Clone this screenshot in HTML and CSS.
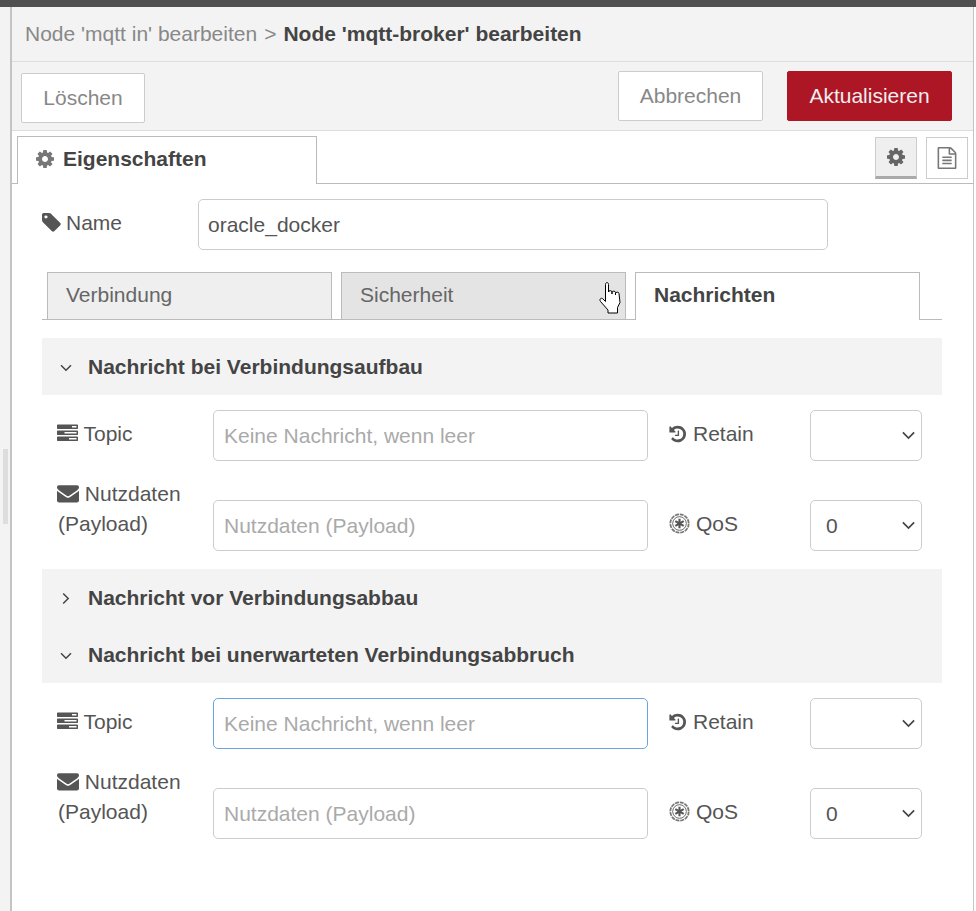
FILE: index.html
```html
<!DOCTYPE html>
<html>
<head>
    <title>Node 'mqtt-broker' bearbeiten</title>
    <link rel="stylesheet" href="styles.css">
</head>

<body>
    <svg class="icon-defs" xmlns="http://www.w3.org/2000/svg">
        <symbol id="i-cog" viewBox="0 0 1536 1536"><path d="M1024 768q0-106-75-181t-181-75-181 75-75 181 75 181 181 75 181-75 75-181zm512-109v222q0 12-8 23t-20 13l-185 28q-19 54-39 91 35 50 107 138 10 12 10 25t-9 23q-27 37-99 108t-94 71q-12 0-26-9l-138-108q-44 23-91 38-16 136-29 186-7 28-36 28h-222q-14 0-24.5-8.5t-11.5-21.5l-28-184q-49-16-90-37l-141 107q-10 9-25 9-14 0-25-11-126-114-165-168-7-10-7-23 0-12 8-23 15-21 51-66.5t54-70.5q-27-50-41-99l-183-27q-13-2-21-12.5t-8-23.5v-222q0-12 8-23t19-13l186-28q14-46 39-92-40-57-107-138-10-12-10-24 0-10 9-23 26-36 98.5-107.5t94.5-71.5q13 0 26 10l138 107q44-23 91-38 16-136 29-186 7-28 36-28h222q14 0 24.5 8.5t11.5 21.5l28 184q49 16 90 37l142-107q9-9 24-9 13 0 25 10 129 119 165 170 7 8 7 22 0 12-8 23-15 21-51 66.5t-54 70.5q26 50 41 98l183 28q13 2 21 12.5t8 23.5z"/></symbol>
        <symbol id="i-tag" viewBox="128 256 1536 1536"><path d="M576 576q0-53-37.500-90.500t-90.500-37.500-90.500 37.500-37.500 90.500 37.500 90.500 90.500 37.500 90.500-37.500 37.500-90.500zm1067 576q0 53-37 90l-491 492q-39 37-91 37-53 0-90-37l-715-716q-38-37-64.500-101t-26.500-117v-416q0-52 38-90t90-38h416q53 0 117 26.500t102 64.500l715 714q37 39 37 91z"/></symbol>
        <symbol id="i-tasks" viewBox="0 0 1792 1792"><path d="M1024 1408h640v-128h-640v128zm-384-512h1024v-128h-1024v128zm640-512h384v-128h-384v128zm512 832v256q0 26-19 45t-45 19h-1664q-26 0-45-19t-19-45v-256q0-26 19-45t45-19h1664q26 0 45 19t19 45zm0-512v256q0 26-19 45t-45 19h-1664q-26 0-45-19t-19-45v-256q0-26 19-45t45-19h1664q26 0 45 19t19 45zm0-512v256q0 26-19 45t-45 19h-1664q-26 0-45-19t-19-45v-256q0-26 19-45t45-19h1664q26 0 45 19t19 45z"/></symbol>
        <symbol id="i-envelope" viewBox="0 0 1792 1792"><path d="M1792 710v794q0 66-47 113t-113 47h-1472q-66 0-113-47t-47-113v-794q44 49 101 87 362 246 497 345 57 42 92.500 65.500t94.500 48 110 24.500h2q51 0 110-24.500t94.500-48 92.500-65.500q170-123 498-345 57-39 100-87zm0-294q0 79-49 151t-122 123q-376 261-468 325-10 7-42.500 30.500t-54 38-52 32.500-57.500 27-50 9h-2q-23 0-50-9t-57.500-27-52-32.500-54-38-42.500-30.500q-91-64-262-182.500t-205-142.500q-62-42-117-115.500t-55-136.500q0-78 41.500-130t118.500-52h1472q65 0 112.500 47t47.500 113z"/></symbol>
        <symbol id="i-history" viewBox="0 0 1664 1664"><path transform="translate(0 -64)" d="M1664 896q0 156-61 298t-164 245-245 164-298 61q-172 0-327-72.500t-264-204.500q-7-10-6.500-22.500t8.500-20.500l137-138q10-9 25-9 16 2 23 12 73 95 179 147t225 52q104 0 198.500-40.500t163.500-109.500 109.500-163.500 40.500-198.500-40.500-198.500-109.500-163.500-163.500-109.500-198.500-40.500q-98 0-188 35.500t-160 101.500l137 138q31 30 14 69-17 40-59 40h-448q-26 0-45-19t-19-45v-448q0-42 40-59 39-17 69 14l130 129q107-101 244.500-156.500t284.500-55.500q156 0 298 61t245 164 164 245 61 298zm-640-288v448q0 14-9 23t-23 9h-320q-14 0-23-9t-9-23v-64q0-14 9-23t23-9h224v-352q0-14 9-23t23-9h64q14 0 23 9t9 23z"/></symbol>
        <symbol id="i-empire" viewBox="0 0 24 24">
            <circle cx="12" cy="12" r="10.500" fill="none" stroke="#777" stroke-width="2" stroke-dasharray="4.500 1"/>
            <circle cx="12" cy="12" r="7.800" fill="none" stroke="#555" stroke-width="1"/>
            <path d="M12 6.500v11M7.200 9.200l9.600 5.600M16.800 9.200l-9.600 5.600" fill="none" stroke="#555" stroke-width="2.400"/>
        </symbol>
        <symbol id="i-file" viewBox="0 0 1792 1792"><path d="M1596 380q28 28 48 76t20 88v1152q0 40-28 68t-68 28h-1344q-40 0-68-28t-28-68v-1600q0-40 28-68t68-28h896q40 0 88 20t76 48zm-444-244v376h376q-10-29-22-41l-313-313q-12-12-41-22zm384 1528v-1024h-416q-40 0-68-28t-28-68v-416h-768v1536h1280zm-1024-864q0-14 9-23t23-9h704q14 0 23 9t9 23v64q0 14-9 23t-23 9h-704q-14 0-23-9t-9-23v-64zm736 224q14 0 23 9t9 23v64q0 14-9 23t-23 9h-704q-14 0-23-9t-9-23v-64q0-14 9-23t23-9h704zm0 256q14 0 23 9t9 23v64q0 14-9 23t-23 9h-704q-14 0-23-9t-9-23v-64q0-14 9-23t23-9h704z"/></symbol>
        <symbol id="i-down" viewBox="0 0 12 8"><path d="M1 1.200l5 5 5-5" fill="none" stroke="currentColor" stroke-width="1.500"/></symbol>
        <symbol id="i-right" viewBox="0 0 8 12"><path d="M1.200 1l5 5-5 5" fill="none" stroke="currentColor" stroke-width="1.500"/></symbol>
    </svg>

    <div class="top-bar"></div>

    <div class="workspace">
        <div class="side-strip"><div class="strip-handle"></div></div>

        <div class="panel">
            <div class="title-bar">
                <span class="crumb">Node 'mqtt in' bearbeiten</span>
                <span class="crumb-sep">&gt;</span>
                <span class="crumb-current">Node 'mqtt-broker' bearbeiten</span>
            </div>

            <div class="button-bar">
                <button class="btn btn-delete">Löschen</button>
                <button class="btn btn-cancel">Abbrechen</button>
                <button class="btn btn-primary">Aktualisieren</button>
            </div>

            <div class="tab-bar">
                <div class="main-tab">
                    <svg class="icon icon-tab-cog"><use href="#i-cog"/></svg>
                    Eigenschaften
                </div>
                <div class="tab-tools">
                    <div class="tool-btn tool-btn-active"><svg class="icon icon-tool"><use href="#i-cog"/></svg></div>
                    <div class="tool-btn"><svg class="icon icon-tool-file"><use href="#i-file"/></svg></div>
                </div>
            </div>

            <div class="content">
                <div class="name-row">
                    <label class="name-label"><svg class="icon icon-tag"><use href="#i-tag"/></svg> Name</label>
                    <input type="text" class="field field-name" value="oracle_docker">
                </div>

                <div class="sub-tabs">
                    <div class="sub-tab">Verbindung</div>
                    <div class="sub-tab sub-tab-hover">Sicherheit</div>
                    <div class="sub-tab sub-tab-active">Nachrichten</div>
                </div>

                <div class="section-head">
                    <svg class="chevron chevron-down"><use href="#i-down"/></svg>
                    Nachricht bei Verbindungsaufbau
                </div>
                <div class="section-body">
                    <div class="msg-row">
                        <label class="msg-label"><svg class="icon icon-tasks"><use href="#i-tasks"/></svg> Topic</label>
                        <input type="text" class="field field-msg" placeholder="Keine Nachricht, wenn leer">
                        <label class="opt-label"><svg class="icon icon-history"><use href="#i-history"/></svg> Retain</label>
                        <div class="select-wrap">
                            <select class="field-select"><option></option></select>
                            <svg class="select-arrow"><use href="#i-down"/></svg>
                        </div>
                    </div>
                    <div class="msg-row">
                        <label class="msg-label msg-label-wrap"><svg class="icon icon-envelope"><use href="#i-envelope"/></svg> Nutzdaten (Payload)</label>
                        <input type="text" class="field field-msg" placeholder="Nutzdaten (Payload)">
                        <label class="opt-label"><svg class="icon icon-empire"><use href="#i-empire"/></svg> QoS</label>
                        <div class="select-wrap">
                            <select class="field-select"><option>0</option></select>
                            <svg class="select-arrow"><use href="#i-down"/></svg>
                        </div>
                    </div>
                </div>

                <div class="section-head section-head-flush">
                    <svg class="chevron chevron-right"><use href="#i-right"/></svg>
                    Nachricht vor Verbindungsabbau
                </div>

                <div class="section-head">
                    <svg class="chevron chevron-down"><use href="#i-down"/></svg>
                    Nachricht bei unerwarteten Verbindungsabbruch
                </div>
                <div class="section-body">
                    <div class="msg-row">
                        <label class="msg-label"><svg class="icon icon-tasks"><use href="#i-tasks"/></svg> Topic</label>
                        <input type="text" class="field field-msg field-focus" placeholder="Keine Nachricht, wenn leer">
                        <label class="opt-label"><svg class="icon icon-history"><use href="#i-history"/></svg> Retain</label>
                        <div class="select-wrap">
                            <select class="field-select"><option></option></select>
                            <svg class="select-arrow"><use href="#i-down"/></svg>
                        </div>
                    </div>
                    <div class="msg-row">
                        <label class="msg-label msg-label-wrap"><svg class="icon icon-envelope"><use href="#i-envelope"/></svg> Nutzdaten (Payload)</label>
                        <input type="text" class="field field-msg" placeholder="Nutzdaten (Payload)">
                        <label class="opt-label"><svg class="icon icon-empire"><use href="#i-empire"/></svg> QoS</label>
                        <div class="select-wrap">
                            <select class="field-select"><option>0</option></select>
                            <svg class="select-arrow"><use href="#i-down"/></svg>
                        </div>
                    </div>
                </div>
            </div>
        </div>
    </div>

    <svg class="hand-cursor" viewBox="0 0 23 32" xmlns="http://www.w3.org/2000/svg">
        <path d="M6.500 17V2.500c0-2.600 3-2.600 3 0V10c0-1.800 3.500-1.800 3.500 0v2V10.500c0-1.800 3.500-1.800 3.500 0V13v-1.500c0-1.800 3.500-1.800 3.500 0l1 9-2.500 5v5.500H9V28L1.500 19.500c-1.500-2 .5-4.500 2.500-2.500l2.500 2.500z" fill="#fff" stroke="#000" stroke-width="1"/>
    </svg>
</body>
</html>
```

FILE: styles.css
```css
* {
    box-sizing: border-box;
}

html, body {
    height: 911px;
}

body {
    margin: 0;
    padding: 0;
    overflow: hidden;
    position: relative;
    background-color: #fff;
    color: #555;
    font-family: "Liberation Sans", Arial, sans-serif;
    font-size: 21px;
}

.icon-defs {
    width: 0;
    height: 0;
    position: absolute;
}

.icon {
    fill: #555;
    flex: none;
}

.top-bar {
    height: 7px;
    background-color: #505050;
}

.workspace {
    display: flex;
    height: 904px;
}

.side-strip {
    width: 10px;
    padding-top: 442px;
    background-color: #f3f3f3;
}

.strip-handle {
    width: 5px;
    height: 75px;
    margin-left: 3px;
    background-color: #ddd;
}

.panel {
    width: 964px;
    border-left: 2px solid #c4c4c4;
    border-right: 1px solid #c4c4c4;
}

/* header */
.title-bar {
    height: 55px;
    padding-left: 13px;
    display: flex;
    align-items: center;
    background-color: #f3f3f3;
    border-bottom: 1px solid #ddd;
}

.crumb {
    color: #888;
}

.crumb-sep {
    color: #888;
    margin: 0 7px;
}

.crumb-current {
    color: #444;
    font-weight: bold;
}

.button-bar {
    height: 69px;
    padding: 9px 21px 0 9px;
    display: flex;
    align-items: flex-start;
    background-color: #f3f3f3;
    border-bottom: 1px solid #ddd;
}

.btn {
    height: 50px;
    border: 1px solid #ccc;
    border-radius: 2px;
    background-color: #fff;
    color: #888;
    font-family: inherit;
    font-size: 21px;
    cursor: pointer;
}

.btn-delete {
    width: 124px;
    margin-top: 2px;
}

.btn-cancel {
    width: 145px;
    margin-left: auto;
}

.btn-primary {
    width: 165px;
    margin-left: 24px;
    background-color: #ad1625;
    border-color: #ad1625;
    color: #eee;
}

/* tabs */
.tab-bar {
    height: 53px;
    padding: 5px 5px 0 5px;
    display: flex;
    justify-content: space-between;
    border-bottom: 1px solid #bbb;
}

.main-tab {
    width: 300px;
    height: 48px;
    padding: 0 0 3px 18px;
    display: flex;
    align-items: center;
    gap: 9px;
    background-color: #fff;
    border: 1px solid #bbb;
    border-bottom: none;
    color: #444;
    font-weight: bold;
}

.icon-tab-cog {
    width: 18px;
    height: 18px;
    fill: #777;
}

.tab-tools {
    display: flex;
    gap: 9px;
    padding-top: 1px;
}

.tool-btn {
    width: 42px;
    height: 42px;
    display: flex;
    align-items: center;
    justify-content: center;
    background-color: #fff;
    border: 1px solid #ccc;
}

.tool-btn-active {
    background-color: #efefef;
    border-bottom: 3px solid #aaa;
}

.icon-tool {
    width: 18px;
    height: 18px;
    fill: #666;
}

.icon-tool-file {
    width: 22px;
    height: 22px;
    fill: #777;
}

/* form */
.content {
    padding: 15px 0 0 30px;
}

.name-row {
    height: 51px;
    display: flex;
    align-items: center;
}

.name-label {
    width: 156px;
    padding-bottom: 3px;
    display: flex;
    align-items: center;
    gap: 5px;
}

.icon-tag {
    width: 19px;
    height: 19px;
    margin-bottom: 2px;
}

.field {
    height: 51px;
    padding: 0 9px;
    border: 1px solid #ccc;
    border-radius: 5px;
    background-color: #fff;
    color: #555;
    font-family: inherit;
    font-size: 21px;
    outline: none;
}

.field::placeholder {
    color: #aaa;
    opacity: 1;
}

.field-name {
    width: 630px;
}

.field-msg {
    width: 435px;
    padding-left: 10px;
}

.field-focus {
    border-color: #6ba6e0;
}

.sub-tabs {
    width: 900px;
    height: 48px;
    margin-top: 22px;
    padding-left: 5px;
    display: flex;
    gap: 9px;
    border-bottom: 1px solid #bbb;
}

.sub-tab {
    width: 285px;
    height: 48px;
    padding: 0 0 2px 18px;
    display: flex;
    align-items: center;
    background-color: #efefef;
    border: 1px solid #bbb;
    color: #666;
}

.sub-tab-hover {
    background-color: #e4e4e4;
}

.sub-tab-active {
    padding-bottom: 4px;
    background-color: #fff;
    border-bottom: none;
    color: #444;
    font-weight: bold;
}

.section-head {
    width: 900px;
    height: 57px;
    margin-top: 18px;
    padding-left: 46px;
    position: relative;
    display: flex;
    align-items: center;
    background-color: #f3f3f3;
    color: #444;
    font-weight: bold;
}

.section-head-flush + .section-head {
    margin-top: 0;
}

.chevron {
    position: absolute;
    color: #444;
}

.chevron-down {
    left: 17px;
    top: 26px;
    width: 14px;
    height: 8px;
}

.chevron-right {
    left: 20px;
    top: 23px;
    width: 8px;
    height: 13px;
}

.section-body {
    padding: 15px 0 0 16px;
    display: flex;
    flex-direction: column;
    gap: 39px;
}

.msg-row {
    height: 51px;
    display: flex;
    align-items: center;
}

.msg-label {
    width: 155px;
    padding-bottom: 3px;
    line-height: 30px;
}

.msg-label-wrap {
    align-self: flex-start;
    margin-top: -21px;
    padding-bottom: 0;
}

.icon-tasks {
    width: 21px;
    height: 21px;
    margin-left: -1px;
    vertical-align: -3px;
}

.icon-envelope {
    width: 22px;
    height: 22px;
    margin-left: -1px;
    vertical-align: -3px;
}

.opt-label {
    width: 162px;
    padding: 0 0 4px 20px;
    display: flex;
    align-items: center;
    gap: 7px;
}

.icon-history {
    width: 18px;
    height: 18px;
}

.icon-empire {
    width: 21px;
    height: 21px;
    margin: 0 -1px 0 1px;
}

.select-wrap {
    position: relative;
    width: 112px;
    height: 51px;
}

.field-select {
    width: 112px;
    height: 51px;
    padding: 0 10px 0 15px;
    border: 1px solid #ccc;
    border-radius: 5px;
    background-color: #fff;
    color: #555;
    font-family: inherit;
    font-size: 21px;
    outline: none;
    appearance: none;
}

.select-arrow {
    position: absolute;
    left: 91px;
    top: 21px;
    width: 15px;
    height: 9px;
    color: #444;
    pointer-events: none;
}

.hand-cursor {
    position: absolute;
    left: 599px;
    top: 282px;
    width: 23px;
    height: 32px;
}
```
